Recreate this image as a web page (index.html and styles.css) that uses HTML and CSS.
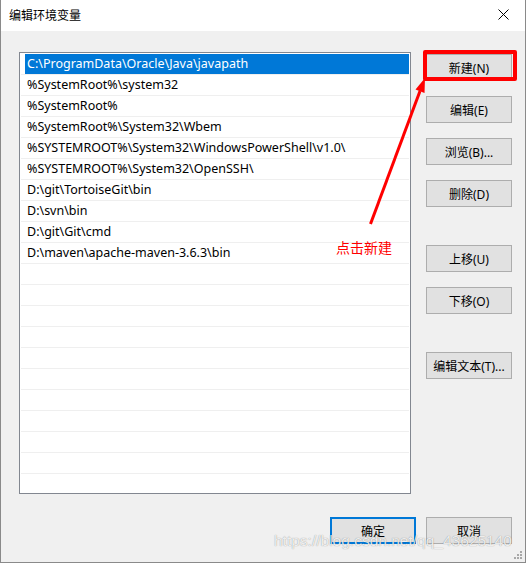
FILE: index.html
```html
<!DOCTYPE html>
<html lang="zh-CN">
<head>
    <meta charset="UTF-8">
    <title>编辑环境变量</title>
    <link rel="stylesheet" href="styles.css">
</head>
<body>
    <div class="window">
        <div class="titlebar">
            <span class="title">编辑环境变量</span>
            <svg class="close" width="11" height="11" viewBox="0 0 11 11">
                <path d="M0.5 0.5L10.5 10.5M10.5 0.5L0.5 10.5" stroke="#000" stroke-width="1"/>
            </svg>
        </div>

        <div class="content">
            <div class="main">
                <div class="list">
                    <div class="row selected"><span>C:\ProgramData\Oracle\Java\javapath</span></div>
                    <div class="row"><span>%SystemRoot%\system32</span></div>
                    <div class="row"><span>%SystemRoot%</span></div>
                    <div class="row"><span>%SystemRoot%\System32\Wbem</span></div>
                    <div class="row"><span>%SYSTEMROOT%\System32\WindowsPowerShell\v1.0\</span></div>
                    <div class="row"><span>%SYSTEMROOT%\System32\OpenSSH\</span></div>
                    <div class="row"><span>D:\git\TortoiseGit\bin</span></div>
                    <div class="row"><span>D:\svn\bin</span></div>
                    <div class="row"><span>D:\git\Git\cmd</span></div>
                    <div class="row"><span>D:\maven\apache-maven-3.6.3\bin</span></div>
                    <div class="row"></div>
                    <div class="row"></div>
                    <div class="row"></div>
                    <div class="row"></div>
                    <div class="row"></div>
                    <div class="row"></div>
                    <div class="row"></div>
                    <div class="row"></div>
                    <div class="row"></div>
                    <div class="row"></div>
                    <div class="row"></div>
                </div>

                <div class="side-buttons">
                    <div class="group">
                        <button class="btn">新建(N)</button>
                        <button class="btn">编辑(E)</button>
                        <button class="btn">浏览(B)...</button>
                        <button class="btn">删除(D)</button>
                    </div>
                    <div class="group">
                        <button class="btn">上移(U)</button>
                        <button class="btn">下移(O)</button>
                    </div>
                    <div class="group">
                        <button class="btn">编辑文本(T)...</button>
                    </div>
                </div>
            </div>

            <div class="footer">
                <button class="btn default">确定</button>
                <button class="btn">取消</button>
            </div>
        </div>

        <!-- annotation drawn over the dialog -->
        <div class="highlight-box"></div>
        <svg class="arrow" width="70" height="160" viewBox="0 0 70 160">
            <line x1="10.5" y1="154" x2="60" y2="21" stroke="#f00" stroke-width="3"/>
            <polygon points="65,8 64.5,23 55.5,19.5" fill="#f00"/>
        </svg>
        <span class="note">点击新建</span>

        <span class="watermark">https://blog.csdn.net/qq_43625140</span>

        <svg class="grip" width="9" height="9" viewBox="0 0 9 9">
            <rect x="6" y="0" width="2" height="2"/>
            <rect x="3" y="3" width="2" height="2"/>
            <rect x="6" y="3" width="2" height="2"/>
            <rect x="0" y="6" width="2" height="2"/>
            <rect x="3" y="6" width="2" height="2"/>
            <rect x="6" y="6" width="2" height="2"/>
        </svg>
    </div>
</body>
</html>
```

FILE: styles.css
```css
/* Windows 10 style dialog */
body {
    margin: 0;
    background-color: #fff;
    font-family: "Noto Sans", "Noto Sans CJK SC", sans-serif;
    font-size: 12px;
    color: #000;
}

.window {
    position: relative;
    width: 526px;
    height: 563px;
    box-sizing: border-box;
    border: 1px solid #8a8a8a;
    border-top: none;
    background-color: #f0f0f0;
    overflow: hidden;
}

.titlebar {
    height: 31px;
    background-color: #fff;
    display: flex;
    align-items: center;
    justify-content: space-between;
    padding: 0 8px 2px 8px;
    box-sizing: border-box;
}

.title {
    font-family: "Noto Sans CJK SC", sans-serif;
    font-size: 12px;
}

.close {
    margin-right: 8px;
}

.content {
    padding: 21px 13px 0 18px;
}

.main {
    display: flex;
    gap: 15px;
}

.list {
    width: 392px;
    height: 442px;
    box-sizing: border-box;
    border: 1px solid #828790;
    background-color: #fff;
    padding: 1px 1px 0 1px;
    overflow: hidden;
}

.row {
    height: 20px;
    border-bottom: 1px solid #efefef;
    display: flex;
}

.row span {
    flex: 1;
    margin-left: 4px;
    padding-left: 2px;
    font-size: 12.5px;
    line-height: 20px;
    white-space: nowrap;
}

.row.selected span {
    background-color: #0078d7;
    color: #fff;
}

.side-buttons {
    display: flex;
    flex-direction: column;
    gap: 38px;
    padding-top: 2px;
}

.group {
    display: flex;
    flex-direction: column;
    gap: 15px;
}

.btn {
    width: 86px;
    height: 27px;
    box-sizing: border-box;
    padding: 0;
    border: 1px solid #adadad;
    background-color: #e1e1e1;
    font-family: "Noto Sans", "Noto Sans CJK SC", sans-serif;
    font-size: 12px;
    color: #000;
}

.btn.default {
    border: 2px solid #0078d7;
}

.footer {
    display: flex;
    justify-content: flex-end;
    gap: 10px;
    margin-top: 23px;
}

.highlight-box {
    position: absolute;
    left: 422px;
    top: 50px;
    width: 94px;
    height: 31px;
    box-sizing: border-box;
    border: 4px solid #f00;
    border-radius: 2px;
}

.arrow {
    position: absolute;
    left: 359px;
    top: 70px;
}

.note {
    position: absolute;
    left: 335px;
    top: 238px;
    font-family: "Noto Sans CJK SC", sans-serif;
    font-size: 14px;
    line-height: 18px;
    color: #f00;
}

.watermark {
    position: absolute;
    left: 273px;
    top: 531px;
    font-family: "Liberation Sans", sans-serif;
    font-size: 15.5px;
    line-height: 20px;
    color: rgba(255, 255, 255, 0.85);
    text-shadow: 0 0 1px rgba(0, 0, 0, 0.45);
    white-space: nowrap;
}

.grip {
    position: absolute;
    left: 513px;
    top: 551px;
    fill: #a8a8a8;
}
```
